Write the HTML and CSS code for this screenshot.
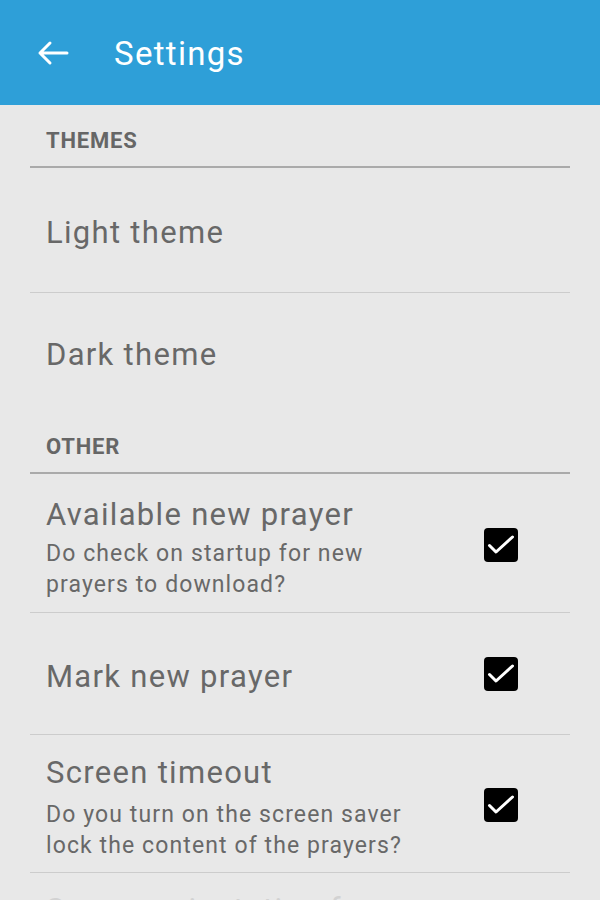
FILE: index.html
```html
<!DOCTYPE html>
<html lang="en">
<head>
  <meta charset="UTF-8" />
  <meta name="viewport" content="width=device-width, initial-scale=1.0"/>
  <title>Settings</title>
  <link rel="stylesheet" href="styles.css">
</head>
<body>

<div class="barra">
  <svg class="atras" width="32" height="26" viewBox="0 0 32 26">
    <path d="M30 13H3M13 3L3 13l10 10" fill="none" stroke="#fff" stroke-width="3" stroke-linecap="round" stroke-linejoin="round"/>
  </svg>
  <span class="titulo">Settings</span>
</div>

<div class="lista">
  <div class="categoria">THEMES</div>
  <div class="item simple primero">
    <div class="texto"><div class="nombre">Light theme</div></div>
  </div>
  <div class="item simple sin-linea">
    <div class="texto"><div class="nombre">Dark theme</div></div>
  </div>

  <div class="categoria">OTHER</div>
  <div class="item">
    <div class="texto">
      <div class="nombre">Available new prayer</div>
      <div class="resumen">Do check on startup for new<br>prayers to download?</div>
    </div>
    <svg class="check" width="34" height="34" viewBox="0 0 34 34">
      <rect width="34" height="34" rx="4" fill="#000"/>
      <path d="M5.5 17.5L12 24L28.5 9" fill="none" stroke="#fff" stroke-width="3" stroke-linecap="round" stroke-linejoin="round"/>
    </svg>
  </div>
  <div class="item simple">
    <div class="texto"><div class="nombre">Mark new prayer</div></div>
    <svg class="check" width="34" height="34" viewBox="0 0 34 34">
      <rect width="34" height="34" rx="4" fill="#000"/>
      <path d="M5.5 17.5L12 24L28.5 9" fill="none" stroke="#fff" stroke-width="3" stroke-linecap="round" stroke-linejoin="round"/>
    </svg>
  </div>
  <div class="item ajustado">
    <div class="texto">
      <div class="nombre">Screen timeout</div>
      <div class="resumen separado">Do you turn on the screen saver<br>lock the content of the prayers?</div>
    </div>
    <svg class="check" width="34" height="34" viewBox="0 0 34 34">
      <rect width="34" height="34" rx="4" fill="#000"/>
      <path d="M5.5 17.5L12 24L28.5 9" fill="none" stroke="#fff" stroke-width="3" stroke-linecap="round" stroke-linejoin="round"/>
    </svg>
  </div>
  <div class="item ultimo">
    <div class="texto">
      <div class="nombre tenue">Screen orientation for prayers</div>
    </div>
  </div>
</div>

</body>
</html>
```

FILE: styles.css
```css
body {
  margin: 0;
  padding: 0;
  background-color: #e8e8e8;
  font-family: Roboto, "Noto Sans", sans-serif;
  color: #686868;
  overflow: hidden;
  height: 900px;
}

.barra {
  height: 105px;
  background-color: #2e9fd8;
  display: flex;
  align-items: center;
  padding-left: 37px;
}

.atras {
  display: block;
  margin-right: 45px;
}

.titulo {
  color: #fff;
  font-size: 33px;
  letter-spacing: 1.3px;
  margin-top: 2px;
}

.lista {
  padding: 0 30px;
}

.categoria {
  font-size: 22px;
  font-weight: bold;
  letter-spacing: 0.8px;
  color: #666;
  padding: 23px 16px 13px;
  border-bottom: 2px solid #aaa;
}

.item {
  display: flex;
  align-items: center;
  padding: 22px 16px 12px;
  border-bottom: 1px solid #ccc;
}

.item.ajustado {
  padding-top: 19px;
  padding-bottom: 11px;
}

.item.simple {
  height: 122px;
  box-sizing: border-box;
  padding-top: 6px;
  padding-bottom: 0;
}

.item.primero {
  height: 125px;
}

.item.sin-linea {
  border-bottom: none;
  height: 118px;
}

.texto {
  flex: 1;
}

.nombre {
  font-size: 31px;
  line-height: 38px;
  letter-spacing: 1.3px;
}

.tenue {
  color: #d2d2d2;
}

.item.ultimo {
  padding-top: 18px;
}

.resumen {
  font-size: 23px;
  line-height: 31px;
  letter-spacing: 1.1px;
  margin-top: 4px;
}

.resumen.separado {
  margin-top: 7px;
}

.check {
  display: block;
  margin-top: -6px;
  margin-right: 36px;
  flex-shrink: 0;
}
```
